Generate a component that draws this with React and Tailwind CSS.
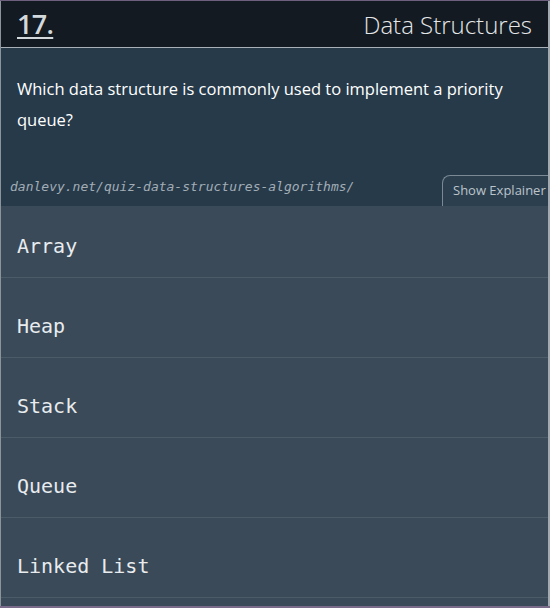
export default function App() {
  const options = ["Array", "Heap", "Stack", "Queue", "Linked List"];
  return (
    <div className="w-[550px] h-[608px] flex flex-col bg-[#3a4a58] overflow-hidden">
      <div className="h-px bg-[#6e5f7e]" />
      <div className="flex-1 flex flex-col border-l border-l-[#8d939a] border-r-2 border-r-[#a2a9b1]">
        <div className="h-[47px] bg-[#131a21] flex items-center justify-between pl-[16px] pr-[16px] border-b border-b-[#a9b0b8]">
          <span className="text-[27px] font-semibold text-[#d3d8dc] underline underline-offset-[3px] decoration-2 tracking-tight" style={{ fontFamily: '"Open Sans", sans-serif' }}>17.</span>
          <span className="text-[24px] font-light text-[#e4e6e8] pt-[1px]" style={{ fontFamily: '"Open Sans", sans-serif' }}>Data Structures</span>
        </div>
        <div className="bg-[#263a4a] flex flex-col">
          <p className="px-[16px] pt-[25px] text-[16.5px] leading-[31px] text-white" style={{ fontFamily: '"Open Sans", sans-serif' }}>
            Which data structure is commonly used to implement a priority queue?
          </p>
          <div className="flex items-end justify-between mt-[40px]">
            <span className="pl-[9px] pb-[10px] text-[13px] italic text-[#a3adb6]" style={{ fontFamily: '"DejaVu Sans Mono", monospace' }}>danlevy.net/quiz-data-structures-algorithms/</span>
            <div className="w-[106px] h-[31px] border-t border-l border-[#7b8994] rounded-tl-[8px] bg-[#2b3f4f] flex items-center pl-[10px] text-[13px] text-[#bcc4cb]" style={{ fontFamily: '"Open Sans", sans-serif' }}>Show Explainer</div>
          </div>
        </div>
        <div className="flex flex-col bg-[#3a4a58]">
          {options.map((o, i) => (
            <div key={o} className={(i === 0 ? "h-[72px] pt-[28px]" : "h-[80px] pt-[36px]") + " border-b border-b-[#4b5b68] px-[16px] text-[20px] leading-[24px] text-[#e8ecef]"} style={{ fontFamily: '"DejaVu Sans Mono", monospace' }}>
              {o}
            </div>
          ))}
        </div>
      </div>
      <div className="h-[2px] bg-[#7a6b8a]" />
    </div>
  );
}
